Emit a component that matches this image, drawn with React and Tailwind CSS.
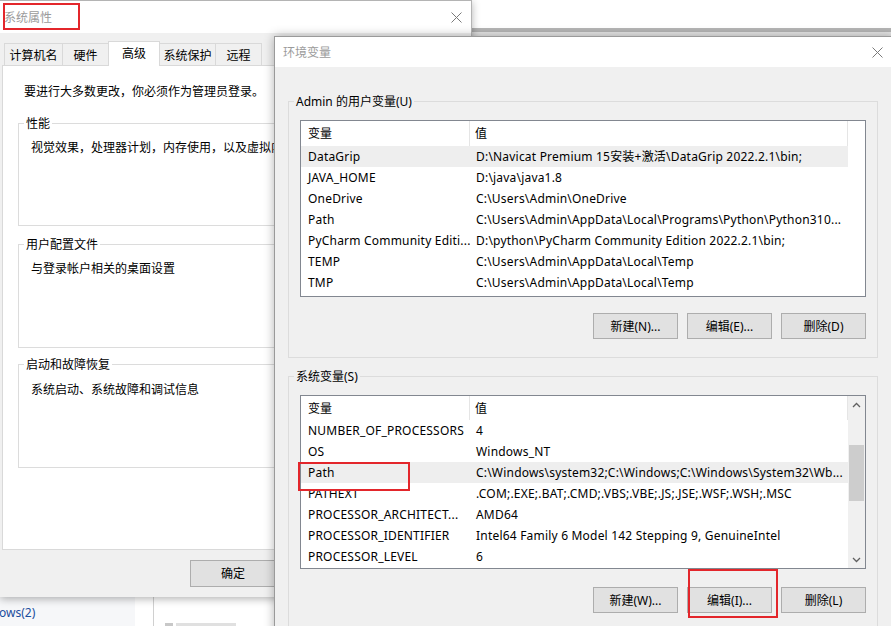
import React from 'react';

const userVars = [
  ['DataGrip', 'D:\\Navicat Premium 15安装+激活\\DataGrip 2022.2.1\\bin;', true],
  ['JAVA_HOME', 'D:\\java\\java1.8'],
  ['OneDrive', 'C:\\Users\\Admin\\OneDrive'],
  ['Path', 'C:\\Users\\Admin\\AppData\\Local\\Programs\\Python\\Python310...'],
  ['PyCharm Community Editi...', 'D:\\python\\PyCharm Community Edition 2022.2.1\\bin;'],
  ['TEMP', 'C:\\Users\\Admin\\AppData\\Local\\Temp'],
  ['TMP', 'C:\\Users\\Admin\\AppData\\Local\\Temp'],
];

const sysVars = [
  ['NUMBER_OF_PROCESSORS', '4'],
  ['OS', 'Windows_NT'],
  ['Path', 'C:\\Windows\\system32;C:\\Windows;C:\\Windows\\System32\\Wb...', true],
  ['PATHEXT', '.COM;.EXE;.BAT;.CMD;.VBS;.VBE;.JS;.JSE;.WSF;.WSH;.MSC'],
  ['PROCESSOR_ARCHITECT...', 'AMD64'],
  ['PROCESSOR_IDENTIFIER', 'Intel64 Family 6 Model 142 Stepping 9, GenuineIntel'],
  ['PROCESSOR_LEVEL', '6'],
];

const tabs = [
  ['计算机名', 'w-[59px]'],
  ['硬件', 'w-[47px]'],
  ['高级', 'w-[52px]'],
  ['系统保护', 'w-[57px]'],
  ['远程', 'w-[47px]'],
];

const CloseIcon = () => (
  <svg width="11" height="11" viewBox="0 0 11 11">
    <path d="M0.5 0.5L10.5 10.5M10.5 0.5L0.5 10.5" stroke="#7a7a7a" strokeWidth="1" fill="none" />
  </svg>
);

const Chevron = ({ up }) => (
  <svg width="9" height="6" viewBox="0 0 9 6">
    <polyline
      points={up ? '1,5 4.5,1.5 8,5' : '1,1 4.5,4.5 8,1'}
      stroke="#606060"
      strokeWidth="1.3"
      fill="none"
    />
  </svg>
);

function WinButton({ label, width = 'w-[85px]', height = 'h-[26px]' }) {
  return (
    <button className={`${width} ${height} shrink-0 border border-[#adadad] bg-[#e1e1e1] text-[12px] text-black`}>
      {label}
    </button>
  );
}

function Group({ title, legendBg, className, children }) {
  return (
    <div className={`flex flex-col border border-[#dcdcdc] ${className}`}>
      <span className={`-mt-[9px] ml-[5px] w-fit px-[2px] leading-[17px] ${legendBg}`}>{title}</span>
      {children}
    </div>
  );
}

function Scrollbar() {
  return (
    <div className="flex w-[17px] flex-col bg-[#f0f0f0]">
      <div className="flex h-[17px] items-center justify-center">
        <Chevron up />
      </div>
      <div className="flex-1">
        <div className="mx-[1px] mt-[32px] h-[56px] bg-[#cdcdcd]" />
      </div>
      <div className="flex h-[17px] items-center justify-center">
        <Chevron />
      </div>
    </div>
  );
}

function VarList({ rows, height, header, scroll }) {
  return (
    <div className={`mx-[11px] flex overflow-hidden border border-[#828790] bg-white ${height}`}>
      <div className="flex w-[547px] flex-col">
        <div className={`flex shrink-0 ${header}`}>
          <div className="flex w-[169px] items-center border-r border-[#e5e5e5] pl-[7px]">变量</div>
          <div className="flex flex-1 items-center border-r border-[#e5e5e5] pl-[5px]">值</div>
        </div>
        {rows.map(([name, value, selected]) => (
          <div
            key={name}
            className={`flex h-[21px] shrink-0 items-center whitespace-nowrap tracking-[0.2px] ${selected ? 'bg-[#eeeeee]' : ''}`}
          >
            <div className="w-[169px] shrink-0 overflow-hidden pl-[7px]">{name}</div>
            <div className="flex-1 overflow-hidden pl-[6px]">{value}</div>
          </div>
        ))}
      </div>
      {scroll ? <Scrollbar /> : null}
    </div>
  );
}

export default function App() {
  return (
    <div className="relative h-[626px] w-[891px] overflow-hidden bg-white text-[12px] leading-[17px] text-black [font-family:'Noto_Sans','Noto_Sans_CJK_SC',sans-serif]">
      {/* window behind, top right */}
      <div className="absolute left-[472px] top-0 flex w-[419px] flex-col">
        <div className="h-[28px] bg-white" />
        <div className="h-[4px] bg-[#b5b5b5]" />
        <div className="h-[5px] bg-[#e6e6e6]" />
      </div>

      {/* window behind, bottom left */}
      <div className="absolute left-0 top-[597px] flex h-[29px] w-[274px]">
        <div className="w-[135px] bg-[#f6f7f9] pt-[7px]">
          <span className="-ml-[1px] text-[#1b4e9e]">ows(2)</span>
        </div>
        <div className="w-[18px] bg-white" />
        <div className="flex flex-1 items-end gap-[3px] border-l border-[#d0d0d0] bg-white pl-[11px]">
          <div className="h-[3px] w-[8px] bg-[#c8c8c8]" />
          <div className="h-[3px] w-[60px] bg-[#e0e0e0]" />
        </div>
      </div>

      {/* 系统属性 */}
      <div className="absolute left-0 top-0 flex h-[597px] w-[472px] flex-col border-r border-t border-[#b4b4b4] bg-[#f0f0f0] shadow-[0_2px_8px_rgba(0,0,0,0.3)]">
        <div className="flex h-[32px] shrink-0 items-center justify-between bg-white pl-[4px] pr-[9px]">
          <span className="text-[#9b9b9b]">系统属性</span>
          <CloseIcon />
        </div>
        <div className="mt-[8px] flex h-[24px] items-end pl-[4px]">
          {tabs.map(([label, w], i) => (
            <div
              key={label}
              className={`${w} flex items-center justify-center border border-b-0 border-[#d9d9d9] pt-[1px] ${i > 0 ? '-ml-px' : ''} ${
                label === '高级' ? 'relative z-10 -mb-px h-[25px] bg-white pb-[3px]' : 'h-[22px] bg-[#f0f0f0]'
              }`}
            >
              {label}
            </div>
          ))}
        </div>
        <div className="mx-[2px] flex h-[485px] flex-col border border-[#d9d9d9] bg-white px-[15px]">
          <span className="pl-[6px] pt-[17px]">要进行大多数更改，你必须作为管理员登录。</span>
          <Group title="性能" legendBg="bg-white" className="mt-[23px] h-[103px]">
            <span className="mt-[7px] pl-[12px] whitespace-nowrap">视觉效果，处理器计划，内存使用，以及虚拟内存</span>
          </Group>
          <Group title="用户配置文件" legendBg="bg-white" className="mt-[18px] h-[104px]">
            <span className="mt-[7px] pl-[12px]">与登录帐户相关的桌面设置</span>
          </Group>
          <Group title="启动和故障恢复" legendBg="bg-white" className="mt-[16px] h-[104px]">
            <span className="mt-[8px] pl-[12px]">系统启动、系统故障和调试信息</span>
          </Group>
        </div>
        <div className="mt-[10px] flex gap-[8px] pl-[190px]">
          <WinButton label="确定" width="w-[86px]" height="h-[27px]" />
          <WinButton label="取消" width="w-[86px]" height="h-[27px]" />
          <WinButton label="应用(A)" width="w-[86px]" height="h-[27px]" />
        </div>
      </div>

      {/* 环境变量 */}
      <div className="absolute left-[274px] top-[36px] flex h-[600px] w-[620px] flex-col border border-[#9a9a9a] bg-[#f0f0f0] shadow-[0_0_10px_rgba(0,0,0,0.3)]">
        <div className="flex h-[30px] shrink-0 items-center justify-between bg-white pl-[8px] pr-[10px]">
          <span className="text-[#9b9b9b]">环境变量</span>
          <CloseIcon />
        </div>
        <div className="flex flex-col pl-[13px] pr-[15px]">
          <Group title="Admin 的用户变量(U)" legendBg="bg-[#f0f0f0]" className="mt-[34px] h-[257px]">
            <div className="mt-[10px]">
              <VarList rows={userVars} height="h-[177px]" header="h-[25px]" />
            </div>
            <div className="mt-[16px] flex justify-end gap-[9px] pr-[11px]">
              <WinButton label="新建(N)..." />
              <WinButton label="编辑(E)..." />
              <WinButton label="删除(D)" />
            </div>
          </Group>
          <Group title="系统变量(S)" legendBg="bg-[#f0f0f0]" className="mt-[18px] h-[270px]">
            <div className="mt-[10px]">
              <VarList rows={sysVars} height="h-[174px]" header="h-[24px]" scroll />
            </div>
            <div className="mt-[18px] flex justify-end gap-[9px] pr-[11px]">
              <WinButton label="新建(W)..." />
              <WinButton label="编辑(I)..." />
              <WinButton label="删除(L)" />
            </div>
          </Group>
        </div>
      </div>

      {/* red annotation frames */}
      <div className="absolute left-[3px] top-[3px] h-[27px] w-[77px] border-2 border-[#e3262b]" />
      <div className="absolute left-[298px] top-[462px] h-[29px] w-[112px] border-2 border-[#e3262b]" />
      <div className="absolute left-[688px] top-[569px] h-[49px] w-[90px] border-2 border-[#e3262b]" />
    </div>
  );
}
